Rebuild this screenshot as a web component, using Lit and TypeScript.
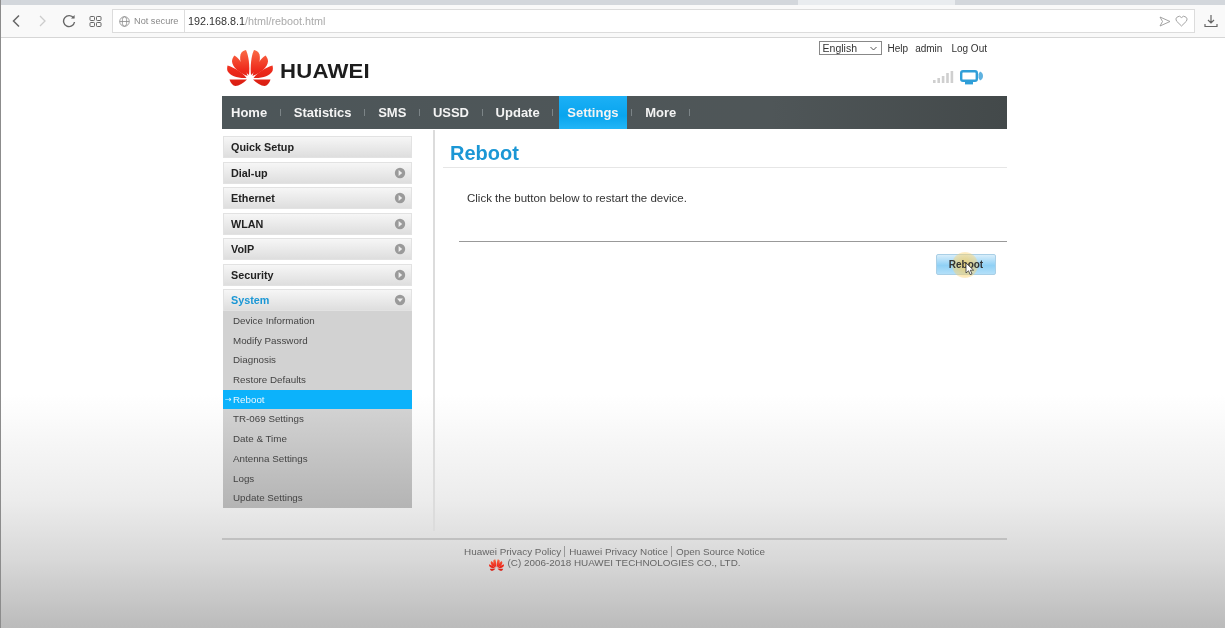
import { LitElement, css, html, svg } from 'lit';
import { customElement } from 'lit/decorators.js';

const NAV = ['Home', 'Statistics', 'SMS', 'USSD', 'Update', 'Settings', 'More'];
const MENU = ['Dial-up', 'Ethernet', 'WLAN', 'VoIP', 'Security'];
const SUB = [
    'Device Information',
    'Modify Password',
    'Diagnosis',
    'Restore Defaults',
    'Reboot',
    'TR-069 Settings',
    'Date & Time',
    'Antenna Settings',
    'Logs',
    'Update Settings',
];

// left half of the flower, the right half is mirrored
const PETALS = [
    'M22 25C15 20 12 11 13.5 4.5C14.5 1.5 17 .3 19 0C21.5 5 23 16 22 25Z',
    'M20.5 26C12 23 5.5 17 5 11.5C5 9 6 7 7.5 5.5C13 9 19 18 20.5 26Z',
    'M19.5 28C11 28.5 3 26 .5 21C0 19.5 0 17.5 .5 15.5C7 17.5 15 22 19.5 28Z',
    'M2.5 29.5H20C16.5 33 12 36 8.5 36C6 36 3.5 33 2.5 29.5Z',
];

const logo = (w: number, h: number) => html`<svg width=${w} height=${h} viewBox="0 0 46 36">
    <defs>
        <linearGradient id="petal" gradientUnits="userSpaceOnUse" x1="0" y1="0" x2="0" y2="36">
            <stop offset="0" stop-color="#fb6a45" />
            <stop offset="0.55" stop-color="#ee2b1c" />
            <stop offset="1" stop-color="#d81d12" />
        </linearGradient>
    </defs>
    ${PETALS.map(
        (d) => svg`<path fill="url(#petal)" d=${d} /><path fill="url(#petal)" transform="translate(46 0) scale(-1 1)" d=${d} />`,
    )}
</svg>`;

const arrow = (open: boolean) => html`<svg class="arrow" width="12" height="12" viewBox="0 0 12 12">
    <circle cx="6" cy="6" r="5.2" fill="#9a9a9a" />
    <path d=${open ? 'M3 4.6H9L6 8Z' : 'M4.6 3V9L8.2 6Z'} fill="#eee" />
</svg>`;

@customElement('app-root')
export class AppRoot extends LitElement {
    static styles = css`
        :host {
            display: block;
            position: relative;
            height: 628px;
            overflow: hidden;
            font-family: 'Liberation Sans', Arial, sans-serif;
            color: #333;
            background: linear-gradient(180deg, #fff 0, #fff 395px, #ececec 500px, #d8d8d8 560px, #bbb 628px);
            filter: blur(0.35px);
        }

        /* edge of the captured window */
        :host::before {
            content: '';
            position: absolute;
            left: 0;
            top: 0;
            bottom: 0;
            width: 1px;
            background: #8c8c8c;
        }

        .tabs {
            height: 5px;
            background: linear-gradient(90deg, #d3d7dc 0, #d3d7dc 798px, #e9ecef 798px, #e9ecef 955px, #d3d7dc 955px);
        }

        .toolbar {
            display: flex;
            align-items: center;
            height: 32px;
            background: #f9f9f9;
            border-bottom: 1px solid #d6d6d6;
            padding: 0 7px 0 0;
        }

        .toolbar svg {
            flex: none;
            fill: none;
            stroke: #666;
        }

        .nav-buttons {
            display: flex;
            align-items: center;
            gap: 14px;
            box-sizing: border-box;
            width: 112px;
            padding-left: 10px;
        }

        .address {
            flex: 1;
            display: flex;
            align-items: center;
            height: 22px;
            background: #fff;
            border: 1px solid #dcdcdc;
            font-size: 10px;
            color: #8a8a8a;
            padding: 0 6px 0 6px;
        }

        .address .secure {
            margin-left: 4px;
            width: 50px;
            font-size: 9.2px;
        }

        .address .url {
            flex: 1;
            border-left: 1px solid #ddd;
            padding-left: 3px;
            font-size: 10.8px;
            line-height: 22px;
            color: #aaa;
        }

        .address .url b {
            font-weight: 400;
            color: #333;
        }

        .address .heart {
            margin-left: 4px;
        }

        .page {
            width: 785px;
            margin-left: 222px;
        }

        .top {
            display: flex;
            justify-content: flex-end;
            align-items: center;
            height: 20px;
            padding: 0 20px 0 0;
            font-size: 10px;
            gap: 7px;
        }

        .lang {
            display: flex;
            align-items: center;
            justify-content: space-between;
            box-sizing: border-box;
            width: 63px;
            height: 14px;
            margin-right: -1px;
            padding: 0 4px 0 3px;
            border: 1px solid #888;
            font-size: 10.5px;
        }

        .logout {
            margin-left: 2px;
        }

        .brand {
            display: flex;
            align-items: flex-start;
            height: 46px;
            margin-top: -8px;
            padding-left: 5px;
        }

        .wordmark {
            margin-left: 7px;
            margin-top: 9px;
            font-size: 20.5px;
            font-weight: 700;
            letter-spacing: 0.2px;
            color: #1d1d1d;
            transform: scaleX(1.08);
            transform-origin: left;
        }

        .status {
            margin-left: auto;
            margin-right: 23px;
            margin-top: 20px;
            display: flex;
            align-items: flex-start;
            gap: 6px;
        }

        nav {
            display: flex;
            align-items: center;
            height: 33px;
            padding-left: 9px;
            background: linear-gradient(90deg, #4d5659 0, #4f5658 70%, #43494a 100%);
            font-size: 13px;
            font-weight: 700;
            color: #f4f4f4;
        }

        nav span {
            display: flex;
            align-items: center;
            height: 100%;
        }

        nav i {
            width: 1px;
            height: 7px;
            background: #7c8487;
            margin: 0 12.8px;
        }

        nav .active {
            padding: 0 8px;
            margin: 0 -8px 0 -7px;
            background: linear-gradient(180deg, #1cb0f6 0, #09a5ee 60%, #22b6f7 100%);
        }

        .columns {
            display: flex;
        }

        aside {
            flex: none;
            width: 189px;
            padding-top: 7px;
            margin: 0 21px 0 1px;
        }

        .item {
            display: flex;
            align-items: center;
            justify-content: space-between;
            box-sizing: border-box;
            height: 22px;
            margin-bottom: 3.5px;
            padding: 0 5px 0 7px;
            border: 1px solid #e2e2e2;
            background: linear-gradient(180deg, #f6f6f6 0, #dedede 100%);
            font-size: 10.8px;
            font-weight: 700;
            color: #222;
        }

        .item.open {
            color: #1b97d5;
            margin: 0;
        }

        .sub {
            background: linear-gradient(180deg, #d2d2d2 0, #d2d2d2 50%, #b4b4b4 100%);
            font-size: 9.8px;
            color: #444;
        }

        .sub div {
            height: 19.7px;
            line-height: 19.7px;
            padding-left: 10px;
        }

        .sub .current {
            position: relative;
            background: #0cb2fb;
            color: #e8f6fd;
        }

        .sub .current em {
            position: absolute;
            left: 2px;
            font-family: 'DejaVu Sans', sans-serif;
            font-style: normal;
            font-size: 8px;
        }

        main {
            flex: 1;
            height: 401px;
            margin-top: 1px;
            border-left: 2px solid #dcdcdc;
            padding-left: 8px;
        }

        h1 {
            margin: 0;
            height: 38px;
            box-sizing: border-box;
            padding: 11px 0 0 7px;
            font-size: 20px;
            line-height: 24px;
            font-weight: 700;
            color: #1b97d5;
            border-bottom: 1px solid #e6e6e6;
        }

        .hint {
            margin: 23px 0 0 24px;
            height: 50px;
            font-size: 11.5px;
            line-height: 15px;
            color: #333;
        }

        .actions {
            margin-left: 16px;
            padding: 12px 11px 0 0;
            border-top: 1px solid #999;
            display: flex;
            justify-content: flex-end;
        }

        .btn {
            position: relative;
            box-sizing: border-box;
            width: 60px;
            height: 21px;
            border: 1px solid #a9cfe6;
            border-radius: 2px;
            background: linear-gradient(180deg, #d8eefb 0, #8fd0f5 55%, #b4e0f9 100%);
            font-size: 10px;
            font-weight: 700;
            line-height: 19px;
            text-align: center;
            color: #333;
        }

        .glow {
            position: absolute;
            left: 15px;
            top: -3px;
            width: 26px;
            height: 26px;
            border-radius: 50%;
            background: radial-gradient(circle, rgba(250, 205, 90, 0.8) 0, rgba(250, 210, 110, 0.5) 60%, rgba(250, 220, 130, 0) 100%);
        }

        .btn b {
            position: relative;
        }

        .cursor {
            position: absolute;
            left: 28px;
            top: 7px;
        }

        footer {
            margin-top: 7px;
            border-top: 2px solid #c0c0c0;
            padding-top: 6px;
            font-size: 9.9px;
            line-height: 11px;
            color: #666;
            text-align: center;
        }

        footer .links span + span {
            border-left: 1px solid #999;
            margin-left: 3px;
            padding-left: 4px;
        }

        footer .copy {
            display: flex;
            justify-content: center;
            align-items: flex-start;
            gap: 3px;
            margin-left: 1px;
        }

        footer .copy svg {
            margin-top: 2px;
        }
    `;

    render() {
        return html`
            <div class="tabs"></div>
            <div class="toolbar">
                <div class="nav-buttons">
                    <svg width="12" height="14" viewBox="0 0 12 14" stroke-width="1.5"><path d="M9 1.5 3.5 7 9 12.5" /></svg>
                    <svg width="10" height="14" viewBox="0 0 10 14" stroke-width="1.3" style="stroke:#ccc;margin-left:2px"><path d="M2 2 7 7 2 12" /></svg>
                    <svg width="14" height="14" viewBox="0 0 14 14" stroke-width="1.4"><path d="M11.6 4A5.5 5.5 0 1 0 12.5 8" /><path d="M12.6 1V4.6H9" style="fill:#666;stroke:none" /></svg>
                    <svg style="margin-left:-1px" width="13" height="13" viewBox="0 0 13 13" stroke-width="1"><rect x="1" y="1.5" width="4.5" height="4" rx=".8" /><rect x="7.5" y="1.5" width="4.5" height="4" rx=".8" /><rect x="1" y="7.5" width="4.5" height="4" rx=".8" /><rect x="7.5" y="7.5" width="4.5" height="4" rx=".8" /></svg>
                </div>
                <div class="address">
                    <svg width="11" height="11" viewBox="0 0 11 11" stroke-width=".8" style="stroke:#888"><circle cx="5.5" cy="5.5" r="4.8" /><ellipse cx="5.5" cy="5.5" rx="2.2" ry="4.8" /><path d="M.7 5.5H10.3" /></svg>
                    <span class="secure">Not secure</span>
                    <span class="url"><b>192.168.8.1</b>/html/reboot.html</span>
                    <svg width="12" height="11" viewBox="0 0 12 11" stroke-width=".9" style="stroke:#999"><path d="M1 1 11 5.5 1 10 3.5 5.5Z" /></svg>
                    <svg class="heart" width="13" height="12" viewBox="0 0 13 12" stroke-width=".9" style="stroke:#999"><path d="M6.5 11 1.6 6.2A3 3 0 0 1 6.5 2.6 3 3 0 0 1 11.4 6.2Z" /></svg>
                </div>
                <svg style="margin-left:9px" width="14" height="14" viewBox="0 0 14 14" stroke-width="1.2"><path d="M7 1V9M4 6 7 9 10 6M1 10V12.5H13V10" /></svg>
            </div>
            <div class="page">
                <div class="top">
                    <div class="lang">
                        <span>English</span>
                        <svg width="7" height="5" viewBox="0 0 7 5"><path d="M.5 1 3.5 4 6.5 1" fill="none" stroke="#555" /></svg>
                    </div>
                    <span>Help</span>
                    <span>admin</span>
                    <span class="logout">Log Out</span>
                </div>
                <div class="brand">
                    ${logo(46, 36)}
                    <span class="wordmark">HUAWEI</span>
                    <div class="status">
                        <svg width="21" height="14" viewBox="0 0 21 14" fill="#cfcfcf">
                            <rect x="0" y="10" width="2.6" height="3" /><rect x="4.4" y="8" width="2.6" height="5" /><rect x="8.8" y="6" width="2.6" height="7" /><rect x="13.2" y="3" width="2.6" height="10" /><rect x="17.6" y="1" width="2.6" height="12" />
                        </svg>
                        <svg width="24" height="15" viewBox="0 0 24 15">
                            <rect x="1.2" y="1.2" width="15.6" height="9.6" rx="1.8" fill="#fff" stroke="#2f9ed8" stroke-width="2.4" />
                            <rect x="5" y="12" width="8" height="2.4" fill="#2f9ed8" />
                            <path d="M18.5 4 20 1.5C24 3 24 9 20 10.5L18.5 8Z" fill="#5fb2e0" />
                        </svg>
                    </div>
                </div>
                <nav>
                    ${NAV.map((n) => html`<span class=${n === 'Settings' ? 'active' : ''}>${n}</span><i></i>`)}
                </nav>
                <div class="columns">
                    <aside>
                        <div class="item">Quick Setup</div>
                        ${MENU.map((m) => html`<div class="item">${m}${arrow(false)}</div>`)}
                        <div class="item open">System${arrow(true)}</div>
                        <div class="sub">
                            ${SUB.map((s) =>
                                s === 'Reboot'
                                    ? html`<div class="current"><em>→</em>${s}</div>`
                                    : html`<div>${s}</div>`,
                            )}
                        </div>
                    </aside>
                    <main>
                        <h1>Reboot</h1>
                        <p class="hint">Click the button below to restart the device.</p>
                        <div class="actions">
                            <div class="btn">
                                <div class="glow"></div>
                                <b>Reboot</b>
                                <svg class="cursor" width="10" height="14" viewBox="0 0 10 14">
                                    <path d="M1 1V11L3.5 8.8 5.2 12.6 7 11.8 5.3 8.2H8.6Z" fill="#fff" stroke="#333" stroke-width=".8" />
                                </svg>
                            </div>
                        </div>
                    </main>
                </div>
                <footer>
                    <div class="links"><span>Huawei Privacy Policy</span><span>Huawei Privacy Notice</span><span>Open Source Notice</span></div>
                    <div class="copy">${logo(15, 12)}<span>(C) 2006-2018 HUAWEI TECHNOLOGIES CO., LTD.</span></div>
                </footer>
            </div>
        `;
    }
}
